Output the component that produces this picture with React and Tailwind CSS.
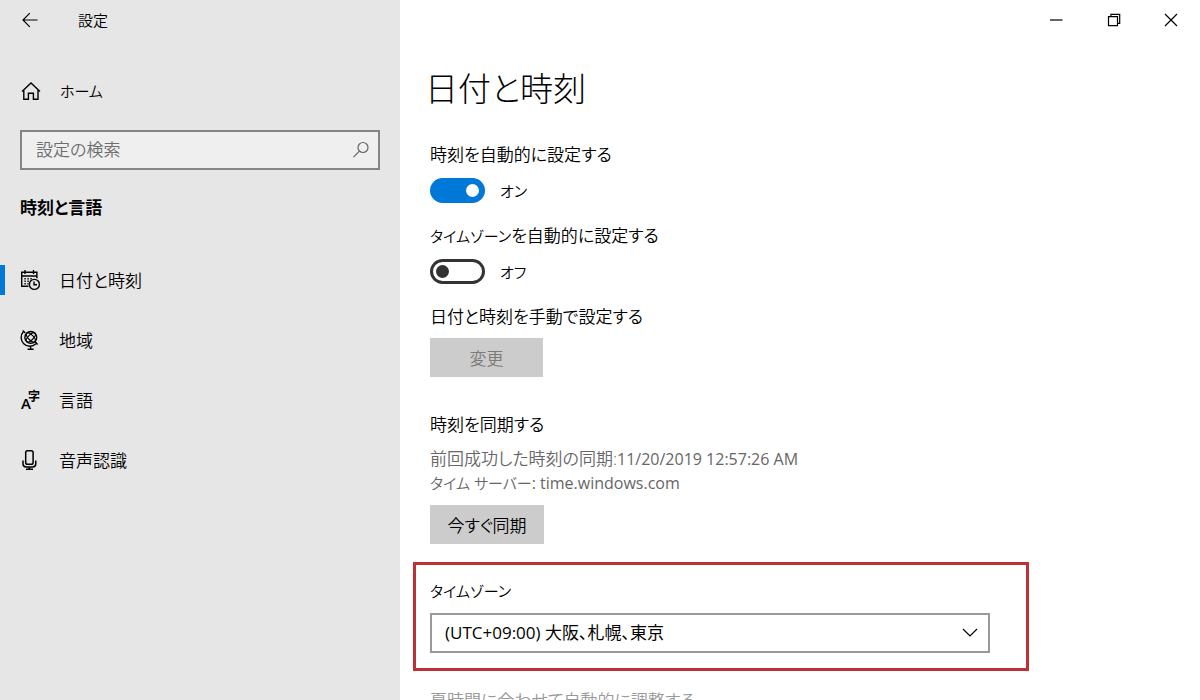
import { useState } from 'react';
import clsx from 'clsx';

const NAV_ITEMS = [
  { id: 'datetime', label: '日付と時刻', icon: CalendarClockIcon },
  { id: 'region', label: '地域', icon: GlobeIcon },
  { id: 'language', label: '言語', icon: LanguageIcon },
  { id: 'speech', label: '音声認識', icon: MicrophoneIcon },
];

const TIME_ZONES = [
  { value: 'Asia/Tokyo', label: '(UTC+09:00) 大阪、札幌、東京' },
  { value: 'Asia/Seoul', label: '(UTC+09:00) ソウル' },
  { value: 'UTC', label: '(UTC) 協定世界時' },
];

function Icon({ size = 20, strokeWidth = 1.3, className, children }) {
  return (
    <svg
      aria-hidden="true"
      className={clsx('shrink-0 overflow-visible', className)}
      fill="none"
      height={size}
      stroke="currentColor"
      strokeWidth={strokeWidth}
      viewBox={`0 0 ${size} ${size}`}
      width={size}
    >
      {children}
    </svg>
  );
}

function BackIcon() {
  return (
    <Icon strokeWidth={1.2}>
      <path d="M17.5 10H3M9.8 3.2 3 10l6.8 6.8" />
    </Icon>
  );
}

function HomeIcon() {
  return (
    <Icon strokeWidth={1.4}>
      <path d="M2 10.6 11 2l9 8.6M3.8 9v9.2h4.6v-6h5v6H18V9" />
    </Icon>
  );
}

function SearchIcon() {
  return (
    <Icon size={18} strokeWidth={1.2}>
      <circle cx="11" cy="6.5" r="5" />
      <path d="M7.4 10.2 1.5 16.2" />
    </Icon>
  );
}

function CalendarClockIcon() {
  return (
    <Icon strokeWidth={1.4}>
      <path d="M8.5 16.3H1.7V2.3h15.2v6M1.7 6h15.2M5 0v4M13.5 0v4" />
      <path d="M4.4 8.8h1.4M7.4 8.8h1.4M10.4 8.8h1.4M4.4 11.3h1.4M7.4 11.3h1.4M4.4 13.8h1.4M7.4 13.8h1.2" />
      <circle cx="14.4" cy="14.4" r="5" />
      <path d="M14 11.5v3.3h3" />
    </Icon>
  );
}

function GlobeIcon() {
  return (
    <Icon strokeWidth={1.4}>
      <circle cx="10.8" cy="7.4" r="5.9" />
      <g strokeWidth="1.1">
        <ellipse cx="10.8" cy="7.4" rx="2.6" ry="5.9" transform="rotate(-45 10.8 7.4)" />
        <ellipse cx="10.8" cy="7.4" rx="5.9" ry="2.6" transform="rotate(-45 10.8 7.4)" />
      </g>
      <path d="M2.8.4 5.200 2.900M3.500 1.600a8.700 8.700 0 0 0 12.400 12.200M15 11.600l2.600 2.800M10.600 16.400v2.600M7.600 19.200h6" />
    </Icon>
  );
}

function LanguageIcon() {
  return (
    <Icon>
      <g fill="currentColor" stroke="none">
        <text fontFamily="Open Sans, sans-serif" fontSize="15" fontWeight="600" x="1" y="19">
          A
        </text>
        <text fontFamily="Noto Sans CJK JP, sans-serif" fontSize="12" fontWeight="700" x="8" y="11">
          字
        </text>
      </g>
    </Icon>
  );
}

function MicrophoneIcon() {
  return (
    <Icon strokeWidth={1.5}>
      <rect height="13.4" rx="1.8" width="7.4" x="5.7" y=".8" />
      <path d="M3 10.5v3.2a3.2 3.2 0 0 0 3.2 3.2h6.4a3.2 3.2 0 0 0 3.2-3.2v-3.2M9.4 17v2.2M6 19.2h7" />
    </Icon>
  );
}

// Katakana runs sit a little smaller than the kanji around them
function Kana({ children }) {
  return <span className="text-[15px]">{children}</span>;
}

function Switch({ id, label, defaultChecked }) {
  const [checked, setChecked] = useState(defaultChecked);

  return (
    <section>
      <h2 id={id}>{label}</h2>
      <label className="mt-[11px] flex h-[25px] items-center gap-[15px]">
        <input
          aria-labelledby={id}
          checked={checked}
          className="flex h-[25px] w-[55px] appearance-none items-center rounded-full border-3 border-[#333] bg-white px-[3px] before:size-[13px] before:rounded-full before:bg-[#333] before:content-[''] checked:justify-end checked:border-[#0078d7] checked:bg-[#0078d7] checked:before:bg-white"
          onChange={(event) => setChecked(event.target.checked)}
          role="switch"
          type="checkbox"
        />
        <Kana>{checked ? 'オン' : 'オフ'}</Kana>
      </label>
    </section>
  );
}

function Sidebar() {
  const [active, setActive] = useState('datetime');

  return (
    <aside className="w-1/3 shrink-0 bg-[#e6e6e6]">
      <div className="flex h-10 items-center gap-[38px] px-5">
        <button aria-label="戻る" type="button">
          <BackIcon />
        </button>
        <span className="text-[15px]">設定</span>
      </div>
      <a className="mt-[31px] flex h-10 items-center gap-5 px-5" href="#home">
        <HomeIcon />
        <Kana>ホーム</Kana>
      </a>
      <label className="mx-5 mt-[19px] flex h-10 items-center border-2 border-[#858585] bg-[#efefef] pr-2 pl-[14px] text-[#666]">
        <input
          aria-label="設定の検索"
          className="min-w-0 flex-1 bg-transparent outline-none placeholder:text-[#6e6e6e]"
          placeholder="設定の検索"
          type="text"
        />
        <SearchIcon />
      </label>
      <h2 className="mt-[26px] px-5 font-bold">時刻と言語</h2>
      <nav className="mt-[30px]">
        {NAV_ITEMS.map(({ id, label, icon: NavIcon }) => (
          <a
            aria-current={active === id ? 'page' : undefined}
            className="flex h-[60px] items-center"
            href={`#${id}`}
            key={id}
            onClick={() => setActive(id)}
          >
            <span className={clsx('mr-[15px] h-[30px] w-[5px]', active === id && 'bg-[#0078d7]')} />
            <NavIcon />
            <span className="ml-[19px] pt-[2px]">{label}</span>
          </a>
        ))}
      </nav>
    </aside>
  );
}

function WindowControls() {
  return (
    <div className="flex h-10 justify-end">
      <button aria-label="最小化" className="flex w-[57px] items-center justify-center" type="button">
        <Icon size={14} strokeWidth={1.2}>
          <path d="M0 7h12.5" />
        </Icon>
      </button>
      <button aria-label="元に戻す" className="flex w-[57px] items-center justify-center" type="button">
        <Icon size={14} strokeWidth={1.2}>
          <path d="M1.5 3.7h9v9h-9zM3.9 3.7V1.3h8.8v9h-2.2" />
        </Icon>
      </button>
      <button aria-label="閉じる" className="flex w-[58px] items-center justify-center" type="button">
        <Icon size={14} strokeWidth={1.2}>
          <path d="m1 1 12 12M13 1 1 13" />
        </Icon>
      </button>
    </div>
  );
}

export default function App() {
  const [timeZone, setTimeZone] = useState('Asia/Tokyo');

  return (
    <div
      className="flex h-screen overflow-hidden bg-white font-['Open_Sans','Noto_Sans_CJK_JP',sans-serif] text-[17px] leading-6 font-[350] text-black [font-feature-settings:'palt']"
      lang="ja"
    >
      <Sidebar />
      <main className="min-w-0 flex-1">
        <WindowControls />
        <div className="pr-[171px] pl-[30px]">
          <h1 className="mt-[25px] -ml-[5px] text-[33px] leading-[48px] font-light">日付と時刻</h1>
          <div className="mt-[30px] space-y-[21px]">
            <Switch defaultChecked id="auto-time" label="時刻を自動的に設定する" />
            <Switch
              defaultChecked={false}
              id="auto-zone"
              label={
                <>
                  <Kana>タイムゾーン</Kana>を自動的に設定する
                </>
              }
            />
          </div>

          <h2 className="mt-[21px]">日付と時刻を手動で設定する</h2>
          <button className="mt-[9px] h-[39px] w-[113px] bg-[#ccc] pt-[2px] text-[#7a7a7a]" disabled type="button">
            変更
          </button>

          <h2 className="mt-9">時刻を同期する</h2>
          <p className="mt-[10px] text-[#666]">
            前回成功した時刻の同期:
            <span className="text-base leading-6 font-normal">11/20/2019 12:57:26 AM</span>
          </p>
          <p className="text-[#666]">
            <Kana>タイム サーバー</Kana>
            <span className="text-base leading-6 font-normal">: time.windows.com</span>
          </p>
          <button className="mt-[10px] h-[39px] w-[114px] bg-[#ccc] pt-[2px]" type="button">
            今すぐ同期
          </button>

          <section className="mt-[18px] -ml-[17px] border-3 border-[#bf2f36] pt-[14px] pr-9 pb-[15px] pl-[14px]">
            <label htmlFor="time-zone">
              <Kana>タイムゾーン</Kana>
            </label>
            <div className="relative mt-[10px]">
              <select
                className="block h-10 w-full appearance-none border-2 border-[#999] bg-white px-[13px] font-normal"
                id="time-zone"
                onChange={(event) => setTimeZone(event.target.value)}
                value={timeZone}
              >
                {TIME_ZONES.map(({ value, label }) => (
                  <option key={value} value={value}>
                    {label}
                  </option>
                ))}
              </select>
              <Icon className="pointer-events-none absolute top-3 right-3" size={16} strokeWidth={1.2}>
                <path d="m1 4 7 7 7-7" />
              </Icon>
            </div>
          </section>

          <h2 className="mt-[18px] text-[#999]">夏時間に合わせて自動的に調整する</h2>
        </div>
      </main>
    </div>
  );
}
